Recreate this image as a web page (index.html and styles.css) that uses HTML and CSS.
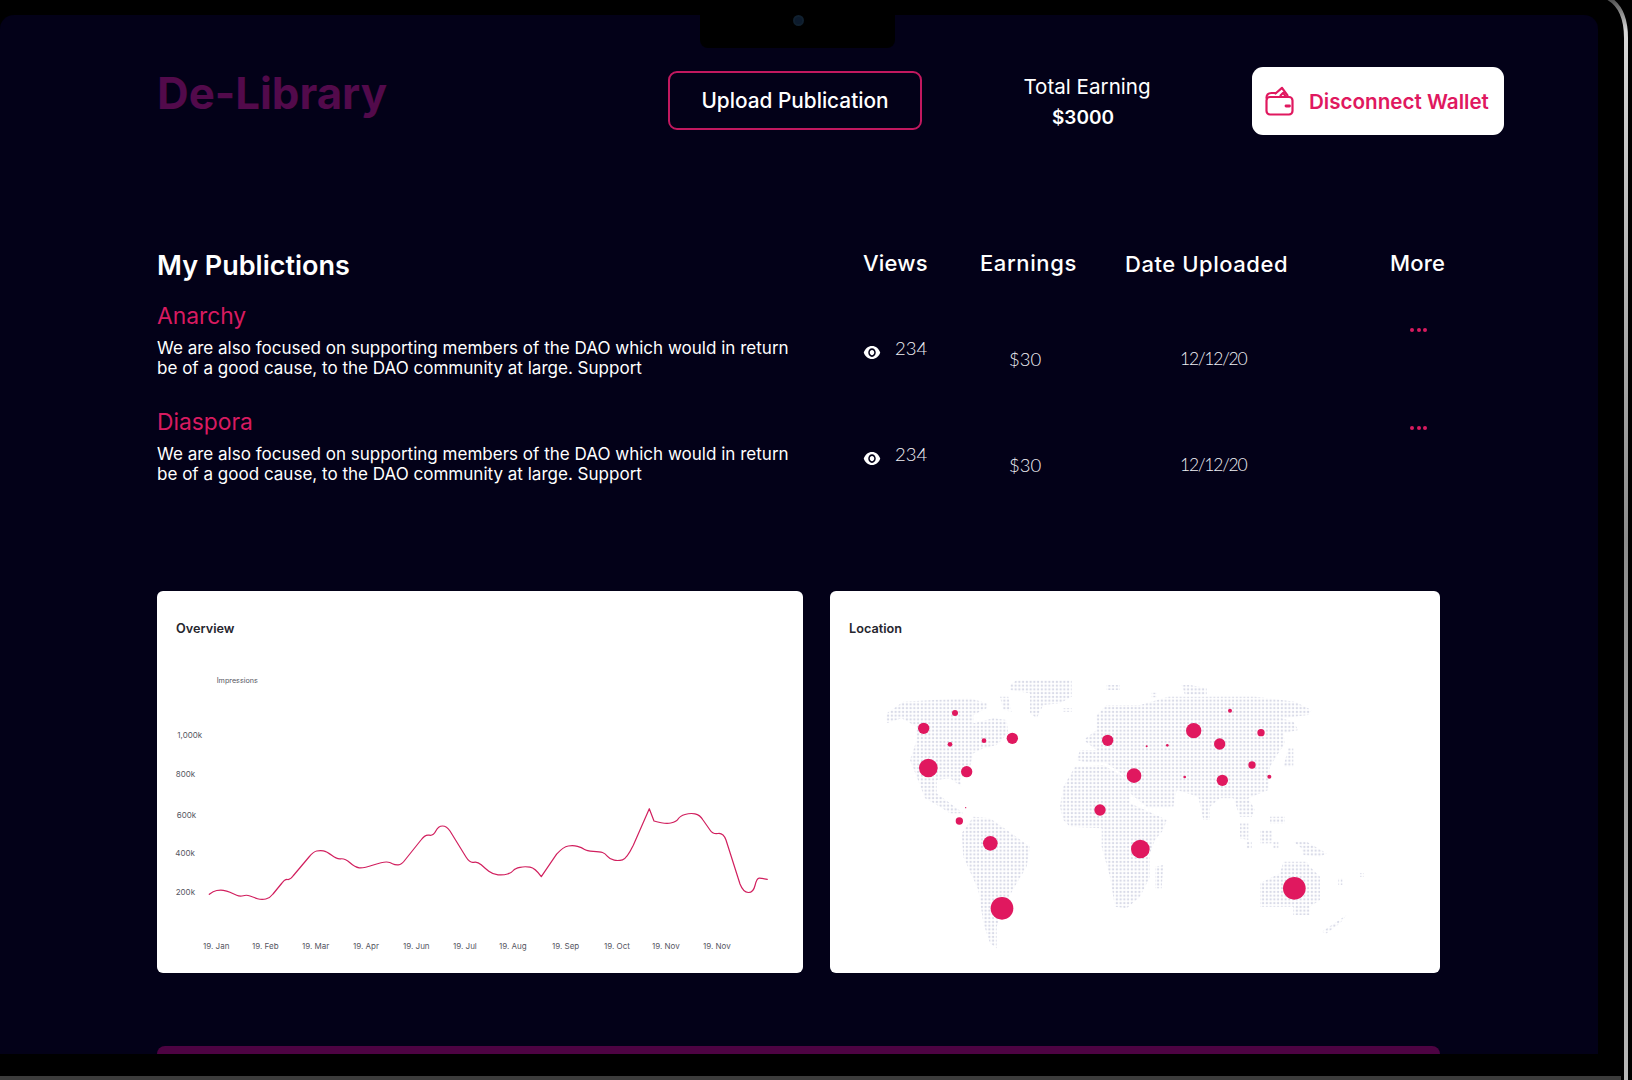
FILE: index.html
```html
<!DOCTYPE html>
<html lang="en">
<head>
<meta charset="utf-8">
<title>De-Library</title>
<link rel="stylesheet" href="styles.css">
</head>
<body>
<div class="laptop">
  <svg class="bezel" viewBox="0 0 1632 1080" width="1632" height="1080" aria-hidden="true">
    <defs>
      <linearGradient id="bezelLine" x1="0" y1="0" x2="0" y2="1">
        <stop offset="0" stop-color="#4a4a4a"/>
        <stop offset="0.03" stop-color="#d8d8d8"/>
        <stop offset="0.5" stop-color="#8c8c8c"/>
        <stop offset="1" stop-color="#b8b8b8"/>
      </linearGradient>
    </defs>
    <path class="bezel-line" d="M1608 -2 Q1626 8 1626 38 V1080" stroke="url(#bezelLine)"/>
  </svg>
  <div class="notch"><span class="camera"></span></div>

  <main class="screen">
    <header class="topbar">
      <h1 class="brand">De-Library</h1>
      <button class="btn-upload" type="button">Upload Publication</button>
      <div class="earning">
        <span class="earning-label">Total Earning</span>
        <strong class="earning-value">$3000</strong>
      </div>
      <button class="btn-wallet" type="button">
        <svg class="wallet-icon" viewBox="0 0 30 30" width="30" height="30" aria-hidden="true">
          <path d="M1.5 12 C1.5 9 3.5 7 6.5 7 H10.5"/>
          <path d="M10.5 7.5 L17 1.8 L22.5 9.5"/>
          <path d="M15.5 9.5 L18.2 6.8 L20 9.5"/>
          <rect x="1.5" y="11" width="26" height="17.5" rx="3.5"/>
          <path class="wallet-clasp" d="M21 20 H24.5"/>
        </svg>
        <span>Disconnect Wallet</span>
      </button>
    </header>

    <section class="pubs">
      <h2 class="pubs-title">My Publictions</h2>
      <div class="col-head col-views">Views</div>
      <div class="col-head col-earn">Earnings</div>
      <div class="col-head col-date">Date Uploaded</div>
      <div class="col-head col-more">More</div>

      <div class="pub-info">
        <h3 class="pub-name">Anarchy</h3>
        <p class="pub-desc">We are also focused on supporting members of the DAO which would in return be of a good cause, to the DAO community at large. Support</p>
      </div>
      <div class="cell-views">
        <svg class="eye" viewBox="0 0 24 24" width="18" height="21" preserveAspectRatio="none" aria-hidden="true"><path d="M12 4.5C7 4.5 2.73 7.61 1 12c1.73 4.39 6 7.5 11 7.5s9.27-3.11 11-7.5c-1.73-4.39-6-7.5-11-7.5zM12 17c-2.76 0-5-2.24-5-5s2.24-5 5-5 5 2.24 5 5-2.24 5-5 5zm0-8c-1.66 0-3 1.34-3 3s1.34 3 3 3 3-1.34 3-3-1.34-3-3-3z"/></svg>
        <span>234</span>
      </div>
      <div class="cell-earn">$30</div>
      <div class="cell-date">12/12/20</div>
      <div class="cell-more"><i></i><i></i><i></i></div>

      <div class="pub-info">
        <h3 class="pub-name">Diaspora</h3>
        <p class="pub-desc">We are also focused on supporting members of the DAO which would in return be of a good cause, to the DAO community at large. Support</p>
      </div>
      <div class="cell-views">
        <svg class="eye" viewBox="0 0 24 24" width="18" height="21" preserveAspectRatio="none" aria-hidden="true"><path d="M12 4.5C7 4.5 2.73 7.61 1 12c1.73 4.39 6 7.5 11 7.5s9.27-3.11 11-7.5c-1.73-4.39-6-7.5-11-7.5zM12 17c-2.76 0-5-2.24-5-5s2.24-5 5-5 5 2.24 5 5-2.24 5-5 5zm0-8c-1.66 0-3 1.34-3 3s1.34 3 3 3 3-1.34 3-3-1.34-3-3-3z"/></svg>
        <span>234</span>
      </div>
      <div class="cell-earn">$30</div>
      <div class="cell-date">12/12/20</div>
      <div class="cell-more cell-more-low"><i></i><i></i><i></i></div>
    </section>

    <section class="cards">
      <article class="card card-overview">
        <h3 class="card-title">Overview</h3>
        <svg class="chart" viewBox="157 637 646 336" width="646" height="336" role="img" aria-label="Impressions over time">
          <text class="axis axis-small" x="216.7" y="682.5">Impressions</text>
          <text class="axis" x="177.3" y="738">1,000k</text>
          <text class="axis" x="175.7" y="777">800k</text>
          <text class="axis" x="176.7" y="817.5">600k</text>
          <text class="axis" x="175.3" y="856">400k</text>
          <text class="axis" x="175.7" y="895">200k</text>
          <text class="axis" x="203" y="949">19. Jan</text>
          <text class="axis" x="252" y="949">19. Feb</text>
          <text class="axis" x="302" y="949">19. Mar</text>
          <text class="axis" x="353" y="949">19. Apr</text>
          <text class="axis" x="403" y="949">19. Jun</text>
          <text class="axis" x="453" y="949">19. Jul</text>
          <text class="axis" x="499" y="949">19. Aug</text>
          <text class="axis" x="552" y="949">19. Sep</text>
          <text class="axis" x="604" y="949">19. Oct</text>
          <text class="axis" x="652" y="949">19. Nov</text>
          <text class="axis" x="703" y="949">19. Nov</text>
          <path class="line" d="M209.3 894.3 Q213.3 891 216.7 890.5 Q220 890 223.3 890.3 Q226.7 890.7 230 892.3 Q233.3 894 236.7 895.3 Q240 896.7 243.3 895.7 Q246.7 894.7 250 896 Q253.3 897.3 257.5 898.7 Q261.7 900 265.8 899 Q270 898 273 894 L282 883 Q285 879 287.5 879.5 Q290 880 293 876 L309 857 Q313.3 851.7 316.7 851 Q320 850.3 323.3 850.8 Q326.7 851.3 331.7 855.3 Q336.7 859.3 340.8 858.8 Q345 858.3 350 862.8 Q355 867.3 359.2 867.8 Q363.3 868.3 373.3 865 Q383.3 861.7 386.7 862 Q390 862.3 392.5 863.7 Q395 865 398.3 864.8 Q401.7 864.7 405 860 L421 840 Q425 834.3 429.2 835.2 Q433.3 836 435.8 831 Q438.3 826 442.5 826 Q446.7 826 450 831 L466 857 Q470 863.3 473.7 862.3 Q477.3 861.3 481.2 864.8 Q485 868.3 488.8 871.3 Q492.7 874.3 498 874.8 Q503.3 875.3 507.5 874 Q511.7 872.7 513.3 870.5 Q515 868.3 520 867.3 Q525 866.3 530 867.2 Q535 868 541.3 876.7 L556.6 854.2 Q563.3 846.7 568.3 846 Q573.3 845.3 577.5 846.3 Q581.7 847.3 584.2 849.2 Q586.7 851 593.3 851.3 Q600 851.7 602.5 852.5 Q605 853.3 607.5 856.3 Q610 859.3 614.2 860.2 Q618.3 861 622.5 859.8 Q626.7 858.7 633.3 845.2 L649.3 808.7 L654 821 Q665 824.3 670.8 823 Q676.7 821.7 678.3 818.8 Q680 816 685 814.5 Q690 813 695 813.8 Q700 814.7 703 820 L710 830 Q712.7 834.3 718 833.5 Q723.3 832.7 726 840 L740 884 Q743.3 892.3 748.3 892.5 Q753.3 892.7 755 885.5 Q756.7 878.3 759.2 878.1 Q761.7 878 767.3 879.3"/>
        </svg>
      </article>

      <article class="card card-location">
        <h3 class="card-title">Location</h3>
        <svg class="map" viewBox="0 141 1830 1008" width="610" height="336" role="img" aria-label="World map of readers">
          <defs>
            <pattern id="dots" patternUnits="userSpaceOnUse" width="11.25" height="11.25">
              <circle cx="5.6" cy="5.6" r="3.6" fill="#d9dbe8"/>
            </pattern>
          </defs>
          <g fill="url(#dots)">
            <polygon points="170,370 220,335 310,330 420,325 470,340 470,355 430,375 430,400 490,385 530,390 535,430 500,465 460,475 430,490 420,530 390,570 395,590 360,565 320,570 320,610 360,640 400,670 360,670 330,650 285,625 260,560 240,510 260,450 260,410 215,385 170,400"/>
            <polygon points="540,285 560,270 725,270 725,320 690,340 640,345 620,385 600,370 600,310 540,300"/>
            <polygon points="510,320 535,320 545,365 520,360"/>
            <polygon points="700,355 725,355 725,365 700,365"/>
            <polygon points="395,730 430,680 480,685 530,720 600,770 590,830 560,880 520,950 500,1010 500,1075 480,1060 460,1000 445,900 400,800"/>
            <polygon points="690,650 700,590 735,530 820,525 880,560 900,600 900,640 990,680 1010,690 1000,720 975,750 960,790 960,860 930,920 890,955 855,950 840,860 815,770 815,715 720,710 700,690"/>
            <polygon points="975,830 1000,825 995,895 975,895"/>
            <polygon points="740,510 750,480 800,480 760,450 800,420 800,375 830,345 930,345 1015,320 1210,320 1275,320 1395,335 1425,350 1445,360 1435,375 1355,385 1390,395 1405,420 1360,430 1365,460 1345,490 1320,530 1315,600 1255,625 1275,660 1265,680 1230,680 1210,625 1170,625 1140,650 1140,690 1120,690 1105,620 1040,600 1030,650 950,650 900,610 880,555 830,520 760,515"/>
            <polygon points="1375,475 1390,475 1390,530 1360,530"/>
            <polygon points="830,285 870,285 870,300 830,300"/>
            <polygon points="1055,285 1080,285 1130,295 1130,315 1065,315"/>
            <polygon points="965,308 980,308 980,322 965,322"/>
            <polygon points="1230,700 1255,700 1255,750 1230,745"/>
            <polygon points="1290,720 1325,720 1325,760 1290,760"/>
            <polygon points="1330,755 1345,755 1345,775 1330,775"/>
            <polygon points="1250,755 1265,755 1265,775 1250,775"/>
            <polygon points="1320,680 1365,680 1365,700 1320,700"/>
            <polygon points="1390,755 1430,755 1490,790 1470,800 1420,795 1415,775"/>
            <polygon points="1290,880 1350,850 1360,815 1430,815 1440,830 1470,860 1470,930 1440,950 1440,975 1390,975 1390,950 1290,950"/>
            <polygon points="1475,1025 1550,975 1530,1000 1490,1030"/>
            <polygon points="1525,865 1537,865 1537,885 1525,885"/>
            <polygon points="1590,850 1602,850 1602,860 1590,860"/>
          </g>
          <g class="spots">
            <circle cx="375" cy="369" r="9"/><circle cx="281" cy="415" r="17"/><circle cx="360" cy="463" r="7"/>
            <circle cx="462" cy="452" r="7"/><circle cx="547" cy="445" r="17"/><circle cx="295" cy="534" r="28"/>
            <circle cx="410" cy="545" r="17"/><circle cx="407" cy="653" r="2"/><circle cx="388" cy="693" r="11"/>
            <circle cx="481" cy="760" r="22"/><circle cx="516" cy="955" r="34"/><circle cx="833" cy="451" r="17"/>
            <circle cx="810" cy="660" r="17"/><circle cx="912" cy="557" r="22"/><circle cx="1200" cy="362" r="6"/>
            <circle cx="1091" cy="422" r="23"/><circle cx="1169" cy="462" r="17"/><circle cx="1293" cy="428" r="11"/>
            <circle cx="950" cy="469" r="3"/><circle cx="1012" cy="466" r="4"/><circle cx="1266" cy="525" r="11"/>
            <circle cx="1064" cy="561" r="4"/><circle cx="1177" cy="571" r="17"/><circle cx="1318" cy="560" r="6"/>
            <circle cx="931" cy="777" r="28"/><circle cx="1393" cy="895" r="34"/>
          </g>
        </svg>
      </article>
    </section>

    <div class="next-bar"></div>
  </main>
  <div class="base-line"></div>
</div>
</body>
</html>
```

FILE: styles.css
```css
* { box-sizing: border-box; }
html, body { margin: 0; padding: 0; background: #000; }
body { width: 1632px; height: 1080px; overflow: hidden; font-family: "Inter", "Liberation Sans", sans-serif; color: #fff; }
h1, h2, h3, p { margin: 0; }
button { font-family: inherit; cursor: pointer; }

.laptop { position: relative; width: 1632px; height: 1080px; padding-top: 15px; }
.bezel { position: absolute; left: 0; top: 0; pointer-events: none; }
.bezel-line { fill: none; stroke-width: 4; }
.notch { position: absolute; left: 700px; top: 0; width: 195px; height: 48px; background: #000; border-radius: 0 0 8px 8px; display: flex; justify-content: center; padding-top: 15px; }
.camera { width: 11px; height: 11px; border-radius: 50%; background: #0c1a2c; border: 2px solid #10202f; margin-left: 2px; }

.screen { width: 1598px; height: 1039px; background: #030118; border-radius: 14px 14px 0 0; padding: 53px 0 0 157px; overflow: hidden; }
.base-line { height: 4px; margin-top: 22px; width: 1621px; background: #3c3c3c; }

.topbar { display: flex; align-items: center; height: 67px; }
.brand { width: 511px; font-size: 43.8px; line-height: 52px; font-weight: 700; color: #520a4b; margin-bottom: 15px; flex: none; }
.btn-upload { width: 254px; height: 59px; background: transparent; border: 2px solid #c2185f; border-radius: 9px; color: #fff; font-size: 20.8px; font-weight: 500; margin-bottom: 3px; flex: none; }
.earning { margin-left: 101px; width: 128px; margin-right: 101px; display: flex; flex-direction: column; align-items: center; gap: 11px; margin-bottom: -1px; flex: none; }
.earning-label { font-size: 20.6px; line-height: 20px; font-weight: 400; white-space: nowrap; }
.earning-value { font-size: 19px; line-height: 20px; font-weight: 600; margin-left: -8px; }
.btn-wallet { width: 252px; height: 68px; background: #fff; border: 0; border-radius: 11px; display: flex; align-items: center; gap: 14px; padding: 0 0 0 13px; color: #e0185f; font-size: 20.6px; font-weight: 600; white-space: nowrap; flex: none; margin-bottom: 1px; }
.wallet-icon { fill: none; stroke: #e0185f; stroke-width: 2.2; stroke-linecap: round; stroke-linejoin: round; flex: none; }
.wallet-clasp { stroke-width: 2.8; }

.pubs { display: grid; grid-template-columns: 706px 117px 145px 265px 60px; grid-template-rows: 30px 106px 92px; margin-top: 114px; }
.pubs-title { font-size: 27px; line-height: 30px; font-weight: 600; margin-top: 2px; white-space: nowrap; }
.col-head { font-size: 22px; line-height: 26px; font-weight: 500; margin-top: 1px; letter-spacing: 0.2px; white-space: nowrap; }
.col-earn { letter-spacing: 0.6px; }
.col-date { margin-top: 2px; letter-spacing: 0.55px; }

.pub-info { padding-top: 23.5px; }
.pub-name { font-size: 22.8px; line-height: 26px; font-weight: 400; color: #d81b60; }
.pub-desc { width: 640px; margin-top: 9px; font-size: 17.05px; line-height: 20px; font-weight: 400; color: #fff; }

.cell-views { display: flex; align-items: flex-start; font-family: "Lato", sans-serif; font-size: 18.5px; font-weight: 300; line-height: 22px; color: #f0f0f5; padding-top: 58px; }
.eye { fill: #fff; flex: none; margin: 4.5px 14px 0 0; }
.cell-earn, .cell-date { font-family: "Lato", sans-serif; font-size: 18.5px; font-weight: 300; line-height: 22px; color: #f0f0f5; padding-top: 69px; }
.cell-earn { padding-left: 29px; }
.cell-date { padding-left: 55px; font-size: 17.5px; letter-spacing: -1.2px; }
.cell-more { display: flex; gap: 2.5px; padding: 49px 0 0 20px; }
.cell-more-low { padding-top: 41px; }
.cell-more i { width: 4px; height: 4px; border-radius: 50%; background: #d81b60; }

.cards { display: flex; gap: 27px; margin-top: 114px; }
.card { height: 382px; background: #fff; border-radius: 6px; overflow: hidden; color: #222; flex: none; }
.card-overview { width: 646px; }
.card-location { width: 610px; }
.card-title { font-size: 12.7px; line-height: 16px; font-weight: 600; color: #26262e; padding: 30px 0 0 19px; }
.chart, .map { display: block; }
.axis { font-family: "Inter", sans-serif; font-size: 8px; fill: #55565f; }
.axis-small { font-size: 7.2px; }
.line { fill: none; stroke: #d11f5e; stroke-width: 1.2; stroke-linejoin: round; stroke-linecap: round; }
.spots { fill: #e0185f; }

.next-bar { width: 1283px; height: 8px; margin-top: 73px; background: #4d0342; border-radius: 12px 12px 0 0; }
```
